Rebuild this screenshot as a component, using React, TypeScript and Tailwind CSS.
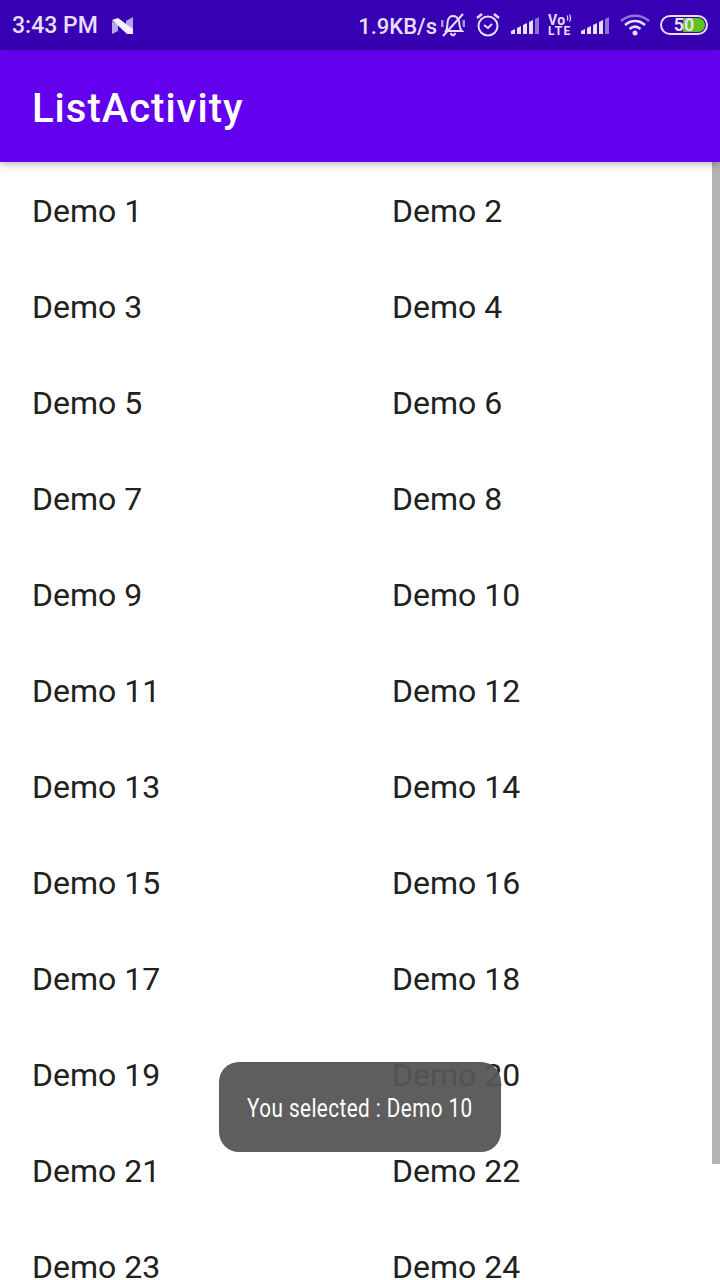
import React from "react";

const items = Array.from({ length: 24 }, (_, i) => `Demo ${i + 1}`);

const Bars = ({ className = "" }: { className?: string }) => (
  <svg width="28" height="20" viewBox="0 0 28 20" className={className}>
    <path d="M0 19 V16 L4 14 V19 Z" fill="#e6defa" />
    <path d="M6 19 V13 L10 11 V19 Z" fill="#e6defa" />
    <path d="M12 19 V10 L16 8 V19 Z" fill="#e6defa" />
    <path d="M18 19 V7 L22 5 V19 Z" fill="#e6defa" />
    <path d="M24 19 V4 L28 2 V19 Z" fill="#8e75d6" />
  </svg>
);

const StatusBar = () => (
  <div className="h-[50px] bg-[#3700b3] flex items-center justify-between pl-3 pr-[12px] text-[#e6defa] font-medium text-[22px] font-['Roboto',sans-serif]">
    <div className="flex items-center gap-[14px]">
      <span className="text-[23px] mt-[3px]">3:43 PM</span>
      <svg width="21" height="18" viewBox="0 0 21 18" className="mt-[1px]">
        <path d="M0 4 L6 8 V14 L0 17 Z" fill="#b9a6e8" />
        <path d="M14 4 L21 0 V13 L14 8 Z" fill="#b9a6e8" />
        <path d="M0 3 L6 1 L21 12 V17 L15 17 Z" fill="#f4f0fd" />
      </svg>
    </div>
    <div className="flex items-center">
      <span className="mr-[4px] mt-[2px]">1.9KB/s</span>
      {/* muted bell */}
      <svg width="24" height="26" viewBox="0 0 24 26" fill="none" stroke="#e6defa" strokeWidth="2" className="mr-[11px]">
        <path d="M5 19 C7 16 6 11 7 8 C8 5 10 4 12 4 C15 4 17 6 18 9 C18.500 12 18 16 21 19 Z" />
        <path d="M9.500 21 C11 24 13 24 14.500 21" />
        <path d="M2 24 L22 2" />
        <path d="M1 8 V15 M23 8 V15" strokeWidth="3" stroke="#a593e0" />
      </svg>
      {/* alarm */}
      <svg width="24" height="26" viewBox="0 0 24 26" fill="none" stroke="#e6defa" strokeWidth="2" className="mr-[11px]">
        <circle cx="12" cy="14" r="9.500" />
        <path d="M8 13 L12 16 L16 12" />
        <path d="M1 6 L6 2 M23 6 L18 2" strokeWidth="2.500" />
      </svg>
      <Bars className="mr-[9px]" />
      {/* volte */}
      <div className="flex flex-col items-start font-bold w-[24px] mr-[9px] font-['Roboto',sans-serif]">
        <div className="flex items-start h-[12px]">
          <span className="text-[14px] leading-[12px] tracking-[0.5px]">Vo</span>
          <svg width="6" height="9" viewBox="0 0 6 9" fill="none" stroke="#e6defa" strokeWidth="1.200">
            <path d="M1 1.500 C2 3 2 5 1 6.500 M3.500 0.500 C5 3 5 5 3.500 7.500" />
          </svg>
        </div>
        <span className="text-[12px] leading-[11px] h-[11px] tracking-[1.5px]">LTE</span>
      </div>
      <Bars className="mr-[11px]" />
      {/* wifi */}
      <svg width="30" height="22" viewBox="0 0 30 22" fill="none" className="mr-[10px]">
        <path d="M1 7 C9 0 21 0 29 7" stroke="#8e75d6" strokeWidth="2.500" />
        <path d="M5 11 C11 5.500 19 5.500 25 11" stroke="#e6defa" strokeWidth="2.500" />
        <path d="M9.500 15 C13 12 17 12 20.500 15" stroke="#e6defa" strokeWidth="2.500" />
        <circle cx="15" cy="19" r="2.500" fill="#e6defa" />
      </svg>
      {/* battery */}
      <div className="relative w-[48px] h-[20px] rounded-full border-2 border-[#e6defa] overflow-hidden">
        <div className="absolute left-[21px] top-[1px] bottom-[1px] right-[1px] bg-[#5fc21f] rounded-r-full" />
        <span className="absolute inset-0 flex items-center justify-center text-[18px] font-bold leading-none text-[#e6defa]">50</span>
      </div>
    </div>
  </div>
);

export default function App() {
  return (
    <div className="relative w-[720px] h-[1280px] overflow-hidden bg-white font-['Roboto',sans-serif]">
      <StatusBar />
      <div className="relative z-10 h-[112px] bg-[#6200ee] flex items-center pl-[32px] pt-[6px] text-white text-[40px] tracking-[1px] font-medium shadow-[0_2px_8px_rgba(0,0,0,0.3)]">
        ListActivity
      </div>
      <div className="grid grid-cols-[360px_360px] pt-px">
        {items.map((item) => (
          <div key={item} className="h-[96px] flex items-center pl-[32px] text-[32px] text-[#212121]">
            {item}
          </div>
        ))}
      </div>
      {/* scrollbar */}
      <div className="absolute right-0 top-[162px] w-2 h-[1002px] bg-[#b3b3b3]" />
      {/* toast */}
      <div className="absolute left-[219px] top-[1062px] w-[282px] h-[90px] rounded-[20px] bg-[#555555]/95 flex items-center justify-center text-white text-[26px] font-['Roboto',sans-serif]">
        <span className="scale-x-[0.795] whitespace-nowrap tracking-[0.55px] mt-[2px]">You selected : Demo 10</span>
      </div>
    </div>
  );
}
